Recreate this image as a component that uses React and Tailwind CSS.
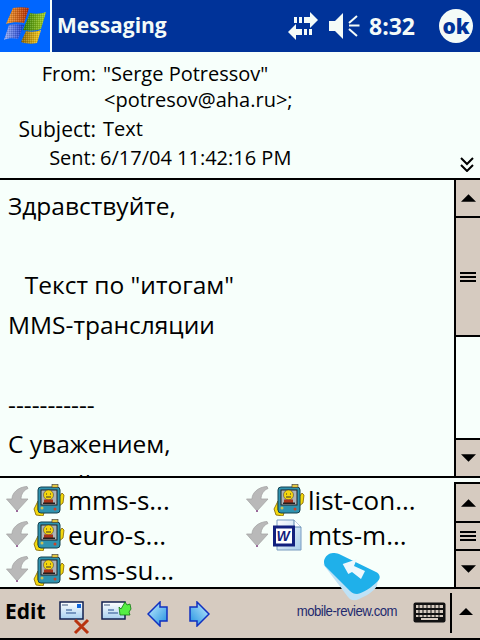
const SANS = "font-['Open_Sans','Noto_Sans',sans-serif]";

function Flag() {
  return (
    <svg width="50" height="52" viewBox="0 0 50 52" className="block">
      <defs>
        <pattern id="dither" width="2" height="2" patternUnits="userSpaceOnUse">
          <rect width="1" height="1" fill="#ffffff" fillOpacity="0.18" />
          <rect x="1" y="1" width="1" height="1" fill="#000000" fillOpacity="0.14" />
        </pattern>
        <linearGradient id="fo" x1="0" y1="0" x2="1" y2="0"><stop offset="0" stopColor="#f0a030" /><stop offset="1" stopColor="#b02c08" /></linearGradient>
        <linearGradient id="fg" x1="0" y1="0" x2="1" y2="0"><stop offset="0" stopColor="#2f7a08" /><stop offset="1" stopColor="#a8d428" /></linearGradient>
        <linearGradient id="fb" x1="0" y1="0" x2="1" y2="0"><stop offset="0" stopColor="#9ab0f4" /><stop offset="1" stopColor="#1436c8" /></linearGradient>
        <linearGradient id="fy" x1="0" y1="0" x2="1" y2="0"><stop offset="0" stopColor="#8a6408" /><stop offset="1" stopColor="#fcd020" /></linearGradient>
      </defs>
      <path d="M13 8c5-1 11-1 16 0l-5 15c-5-1-12-1-18 1z" fill="url(#fo)" />
      <path d="M30 13c5 1 11 1 16-1l-5 17c-5 2-13 2-18 1z" fill="url(#fg)" />
      <path d="M9 25c5-1 10-1 15 0l-6 14c-5-1-10-1-14 1z" fill="url(#fb)" />
      <path d="M26 31c5 1 10 1 15-1l-4 13c-5 1-11 1-16-1z" fill="url(#fy)" />
      <path d="M13 8c5-1 11-1 16 0l-5 15c-5-1-12-1-18 1zM30 13c5 1 11 1 16-1l-5 17c-5 2-13 2-18 1zM9 25c5-1 10-1 15 0l-6 14c-5-1-10-1-14 1zM26 31c5 1 10 1 15-1l-4 13c-5 1-11 1-16-1z" fill="url(#dither)" />
    </svg>
  );
}

function Sync() {
  return (
    <svg width="32" height="30" viewBox="0 0 32 30" className="block" fill="#f4fbf8">
      <rect x="7" y="6" width="3" height="6" />
      <rect x="12" y="6" width="3" height="6" />
      <path d="M17 6h6V1l8 8-8 8v-5h-6z" />
      <path d="M9 18V13L1 21l8 8v-5h6v-6z" />
      <rect x="17" y="18" width="3" height="6" />
      <rect x="22" y="18" width="3" height="6" />
    </svg>
  );
}

function Speaker() {
  return (
    <svg width="32" height="26" viewBox="0 0 32 26" className="block" fill="none">
      <path d="M0 8h6l8-8v26l-8-8H0z" fill="#f4fbf8" />
      <path d="M20 12.500h10.500M20 10l8-7M20 16l8 7" stroke="#f4fbf8" strokeWidth="2" />
    </svg>
  );
}

function Chevrons() {
  return (
    <svg width="14" height="15" viewBox="0 0 14 15" className="block" fill="none" stroke="#000" strokeWidth="2">
      <path d="M1 1l6 6 6-6M1 8l6 6 6-6" />
    </svg>
  );
}

function Tri({ down, w = 15, h = 8 }) {
  return (
    <svg width={w} height={h} viewBox="0 0 16 8" className="block">
      <path d={down ? "M0 0h16l-8 8z" : "M8 0l8 8H0z"} fill="#000" />
    </svg>
  );
}

function Grip() {
  return (
    <div className="flex flex-col gap-[2px]">
      <div className="w-4 h-[2px] bg-black" />
      <div className="w-4 h-[2px] bg-black" />
      <div className="w-4 h-[2px] bg-black" />
    </div>
  );
}

function DownArrow() {
  return (
    <svg width="24" height="27" viewBox="0 0 24 27" className="block">
      <path d="M21 0.500l1 2C18 4 15 8 15 13h7L11 25 0.500 13H6C6 7 12 1 21 0.500z" fill="#b9b9b9" stroke="#a4a4a4" strokeWidth="0.800" />
      <rect x="10" y="24" width="2" height="2" fill="#9a6a9a" />
    </svg>
  );
}

function Mms() {
  return (
    <svg width="32" height="32" viewBox="0 0 32 32" className="block">
      <path d="M1 25l4-8v9l6 3-1 3-7-1z" fill="#f4d90c" stroke="#806000" strokeWidth="0.800" />
      <path d="M26 13l3-4 2 2-1 8-5 4z" fill="#f4d90c" stroke="#806000" strokeWidth="0.800" />
      <rect x="5" y="3" width="22" height="26" rx="3" fill="#2f93b0" stroke="#12404f" />
      <rect x="19" y="0.500" width="6" height="3" fill="#e2c640" stroke="#333" strokeWidth="0.600" />
      <rect x="8" y="6" width="16" height="15" fill="#aeb4b8" stroke="#222" strokeWidth="1" />
      <circle cx="15.500" cy="11" r="5" fill="#f5d60f" stroke="#333" strokeWidth="0.500" />
      <path d="M13 10h1M17 10h1M13 13h5" stroke="#333" strokeWidth="1" />
      <rect x="11" y="15.500" width="9" height="4" fill="#a9351c" />
      <rect x="10" y="18.500" width="12" height="1.500" fill="#222" />
      <circle cx="9" cy="24" r="1.500" fill="#c9c25a" />
      <circle cx="22" cy="25" r="1.500" fill="#c9452a" />
    </svg>
  );
}

function Word() {
  return (
    <svg width="29" height="32" viewBox="0 0 29 32" className="block">
      <defs>
        <linearGradient id="doc" x1="0" y1="0" x2="1" y2="1">
          <stop offset="0" stopColor="#ffffff" />
          <stop offset="1" stopColor="#a9cdea" />
        </linearGradient>
      </defs>
      <path d="M4 1h17l7 7v23H4z" fill="url(#doc)" stroke="#7a9cc0" />
      <path d="M21 1v7h7" fill="#fff" stroke="#5f88b0" />
      <rect x="1.500" y="8" width="19" height="18" fill="#fff" stroke="#12207e" strokeWidth="3" />
      <text x="3.500" y="22" fontSize="14" fontWeight="700" fontStyle="italic" fill="#12207e" fontFamily="'Liberation Sans',sans-serif">W</text>
    </svg>
  );
}

function Attachment({ name, word }) {
  return (
    <div className="flex items-center h-[35px] min-w-0">
      <div className="ml-[6px] w-[27px] shrink-0"><DownArrow /></div>
      <div className="w-[35px] shrink-0">{word ? <Word /> : <Mms />}</div>
      <span className="text-[26px] leading-none text-black whitespace-nowrap">{name}</span>
    </div>
  );
}

function Mail({ id, stamp, children }) {
  return (
    <div className="relative w-[32px] h-[34px]">
      <svg width="25" height="19" viewBox="0 0 25 19" className="block mt-[9px]">
        <defs>
          <linearGradient id={id} x1="0" y1="0" x2="0" y2="1">
            <stop offset="0" stopColor="#ffffff" />
            <stop offset="1" stopColor="#a8d0f0" />
          </linearGradient>
        </defs>
        <rect x="1" y="1" width="23" height="17" fill={`url(#${id})`} stroke="#12204f" strokeWidth="1.500" />
        <path d="M3 4h6" stroke="#7a8ca8" strokeWidth="1.500" />
        <path d="M7 9h6M7 12h10" stroke="#5b7fb0" strokeWidth="1.500" />
        {stamp && <rect x="18" y="3" width="4" height="4" fill="#1166dd" />}
      </svg>
      {children}
    </div>
  );
}

function Blue({ left, id }) {
  return (
    <svg width="21" height="26" viewBox="0 0 21 26" className="block">
      <defs>
        <linearGradient id={id} x1={left ? "0" : "1"} y1="0" x2={left ? "1" : "0"} y2="1">
          <stop offset="0" stopColor="#c8f0ff" />
          <stop offset="1" stopColor="#1e90e0" />
        </linearGradient>
      </defs>
      <path d={left ? "M1 13L13 1v5h7v14h-7v5z" : "M20 13L8 1v5H1v14h7v5z"} fill={`url(#${id})`} stroke="#1030c0" strokeWidth="1.500" />
    </svg>
  );
}

function Keyboard() {
  return (
    <svg width="33" height="21" viewBox="0 0 33 21" className="block">
      <rect x="0.500" y="0.500" width="32" height="20" rx="2" fill="#111" />
      <g fill="#d6cbc0">
        <rect x="3" y="3" width="27" height="3" />
        <rect x="3" y="8" width="27" height="3" />
        <rect x="3" y="13" width="27" height="2" />
      </g>
      <path d="M6 3v12M10 3v12M14 3v12M18 3v12M22 3v12M26 3v12" stroke="#111" strokeWidth="1" />
      <rect x="8" y="16" width="17" height="2" fill="#d6cbc0" />
    </svg>
  );
}

export default function App() {
  return (
    <div className={`relative w-[480px] h-[640px] overflow-hidden bg-[#f7fffb] text-black ${SANS}`}>
      {/* Title bar */}
      <div className="flex h-[52px] bg-[#003399] text-[#f4fbf8]">
        <div className="w-[50px] bg-[#0066ff]"><Flag /></div>
        <div className="w-[2px] bg-[#f7fffb]" />
        <div className="pl-[5px] flex-1 flex items-center text-[21px] font-bold">Messaging</div>
        <div className="flex items-center">
          <Sync />
          <div className="w-[10px]" />
          <Speaker />
          <div className="w-[8px]" />
          <span className="text-[23px] font-bold w-[47px]">8:32</span>
          <div className="w-[23px]" />
          <div className="w-[34px] h-[34px] mr-[7px] rounded-full bg-[#f4fbf8] flex items-center justify-center text-[#003399] text-[21px] font-extrabold leading-none">ok</div>
        </div>
      </div>

      {/* Header */}
      <div className="relative h-[128px] border-b-2 border-black text-[20px] leading-[26px]">
        <div className="grid grid-cols-[96px_1fr] gap-x-[7px] pt-[9px]">
          <div className="text-right">From:</div>
          <div>"Serge Potressov"<br /><span className="pl-[1px]">&lt;potresov@aha.ru&gt;;</span></div>
          <div className="text-right mt-[3px] text-[21px]">Subject:</div>
          <div className="mt-[3px]">Text</div>
          <div className="text-right mt-[3px]">Sent:</div>
          <div className="-ml-[3px] mt-[3px]">6/17/04 11:42:16 PM</div>
        </div>
        <div className="absolute right-[6px] bottom-[6px]"><Chevrons /></div>
      </div>

      {/* Body */}
      <div className="flex h-[298px] border-b-2 border-black">
        <div className="flex-1 overflow-hidden pl-[8px] text-[24.5px] leading-[39.7px] pt-[6px] whitespace-pre">
          <div>Здравствуйте,</div>
          <div>&nbsp;</div>
          <div className="pl-[4px]">{"  "}Текст по "итогам"</div>
          <div>MMS-трансляции</div>
          <div>&nbsp;</div>
          <div>-----------</div>
          <div>С уважением,</div>
          <div>Сергей</div>
        </div>
        <div className="w-[26px] border-l-2 border-black flex flex-col">
          <div className="h-[38px] bg-[#d6cbc0] border-b-2 border-black flex items-center justify-center"><Tri /></div>
          <div className="h-[119px] bg-[#d6cbc0] border-b-2 border-black flex items-center justify-center"><Grip /></div>
          <div className="flex-1 bg-[#f7fffb]" />
          <div className="h-[38px] bg-[#d6cbc0] border-t-2 border-black flex items-center justify-center"><Tri down /></div>
        </div>
      </div>

      {/* Attachments */}
      <div className="flex h-[111px] border-b-2 border-black">
        <div className="flex-1 grid grid-cols-[240px_1fr] content-start pt-[4px]">
          <Attachment name="mms-s..." />
          <Attachment name="list-con..." />
          <Attachment name="euro-s..." />
          <Attachment name="mts-m..." word />
          <Attachment name="sms-su..." />
        </div>
        <div className="mt-[4px] w-[26px] border-l-2 border-t-2 border-black flex flex-col">
          <div className="h-[39px] bg-[#d6cbc0] border-b-2 border-black flex items-center justify-center"><Tri /></div>
          <div className="h-[28px] bg-[#d6cbc0] border-b-2 border-black flex items-center justify-center"><Grip /></div>
          <div className="flex-1 bg-[#d6cbc0] flex items-center justify-center"><Tri down /></div>
        </div>
      </div>

      {/* Toolbar */}
      <div className="relative flex items-center h-[49px] bg-[#d6cbc0]">
        <span className="ml-[5px] text-[21px] font-bold w-[54px] pb-[4px]">Edit</span>
        <div className="w-[42px]"><Mail id="m1" stamp>
          <svg width="17" height="17" viewBox="0 0 17 17" className="absolute left-[14px] top-[17px]"><path d="M2 2l13 13M15 2L2 15" stroke="#b83410" strokeWidth="3" /></svg>
        </Mail></div>
        <div className="w-[46px]"><Mail id="m2">
          <svg width="14" height="15" viewBox="0 0 14 15" className="absolute left-[17px] top-0"><path d="M1 6L3 8 7 1 9 4 12 3 13 8 11 11 12 14 2 14z" fill="#55ee44" stroke="#117711" strokeWidth="0.800" /></svg>
        </Mail></div>
        <div className="w-[42px]"><Blue left id="b1" /></div>
        <Blue id="b2" />
        <div className="flex-1" />
        <span className="mr-[16px] pb-[5px] font-['Liberation_Sans',sans-serif] text-[15px] tracking-[-0.6px] scale-x-[0.88] origin-right text-[#1e2a6e] whitespace-nowrap">mobile-review.com</span>
        <div className="pb-[3px]"><Keyboard /></div>
        <div className="ml-[4px] w-[2px] h-[40px] bg-black self-start mt-[4px]" />
        <div className="w-[28px] flex justify-center pb-[5px]"><Tri w={14} h={7} /></div>
      </div>
      <div className="h-[2px] bg-black" />

      {/* Watermark */}
      <svg width="62" height="52" viewBox="0 0 62 52" className="absolute left-[321px] top-[552px]">
        <path d="M2 12L27 45C30 49 34 49 38 47 45 44 52 40 56 34L57 27 30 30z" fill="#bfe2f6" />
        <path d="M3 9C4 4 8 1 12 1 14 1 16 1 18 2L55 20C59 22 60 26 57 29 50 36 42 41 36 42 33 42 31 41 29 39L4 14C3 12 3 11 3 9z" fill="#1fb0ea" />
        <path d="M21.700 12L35.700 7.300 33 14 44 19 40 27 31 20 27.300 22z" fill="#eef8fd" />
      </svg>
    </div>
  );
}
